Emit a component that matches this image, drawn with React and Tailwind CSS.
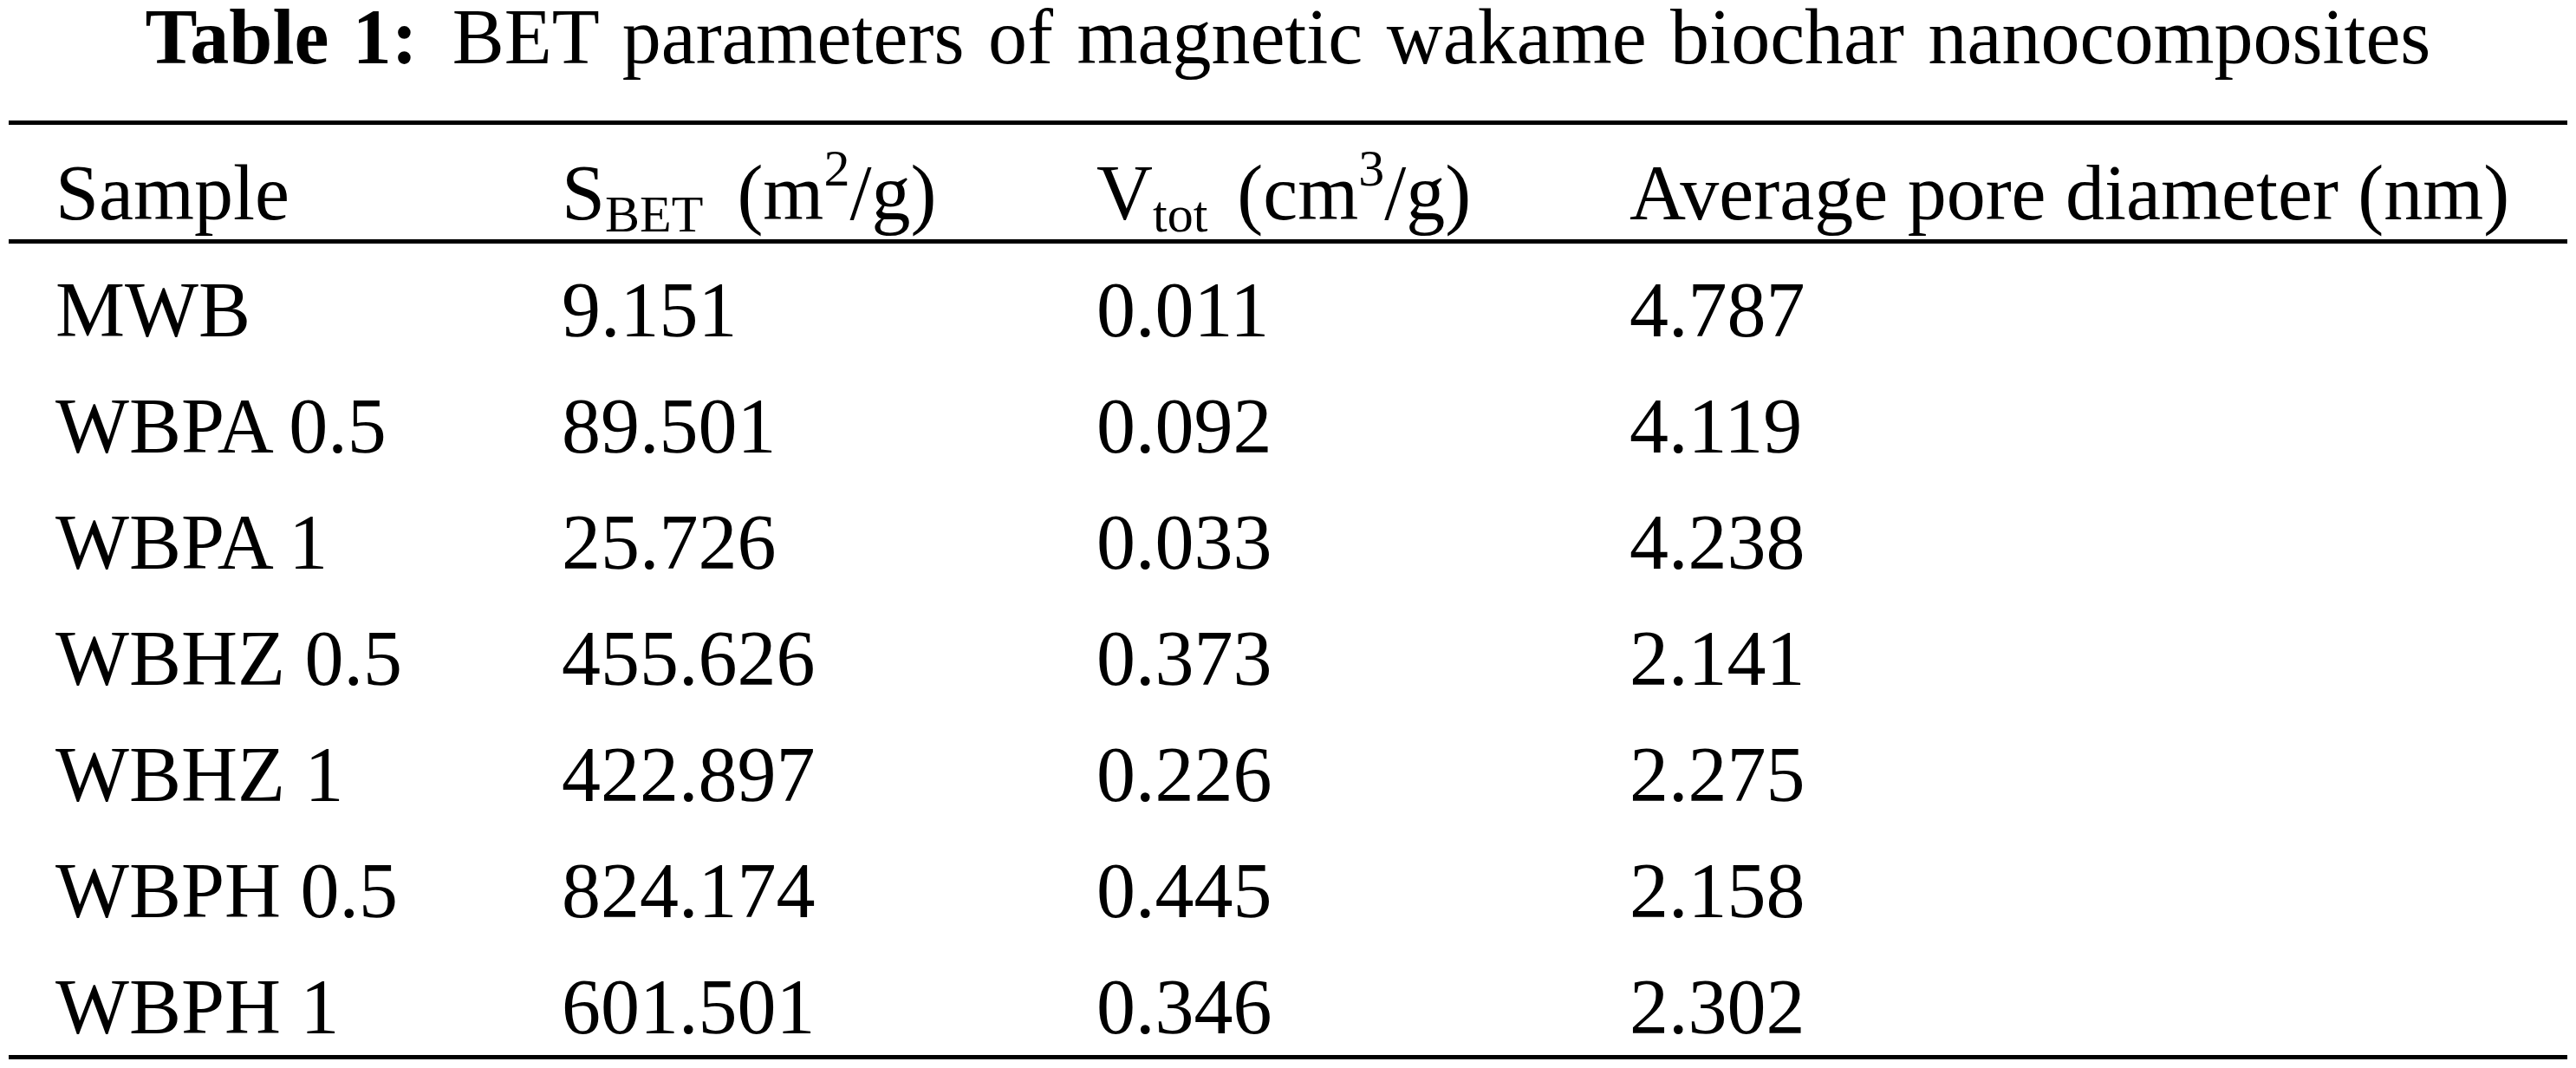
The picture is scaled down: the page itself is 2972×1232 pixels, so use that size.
import React from 'react';

const rows = [
  ['MWB', '9.151', '0.011', '4.787'],
  ['WBPA 0.5', '89.501', '0.092', '4.119'],
  ['WBPA 1', '25.726', '0.033', '4.238'],
  ['WBHZ 0.5', '455.626', '0.373', '2.141'],
  ['WBHZ 1', '422.897', '0.226', '2.275'],
  ['WBPH 0.5', '824.174', '0.445', '2.158'],
  ['WBPH 1', '601.501', '0.346', '2.302'],
];

const cols = 'grid grid-cols-[584px_617px_615px_1fr] pl-[54px]';

const Rule = () => <div className="h-[5px] bg-black" />;

const App = () => {
  return (
    <div className="w-[2972px] h-[1232px] bg-white text-black px-[10px] font-['Liberation_Serif','Times_New_Roman',serif] text-[90px] overflow-hidden">
      <div className="flex justify-center leading-[86px] whitespace-pre [word-spacing:5px]">
        <span className="font-bold">Table 1:</span>
        <span className="ml-[40px]">BET parameters of magnetic wakame biochar nanocomposites</span>
      </div>

      <div className="mt-[53px]">
        <Rule />
        <div className={`${cols} leading-[100px] pt-[29px] pb-[3px] whitespace-nowrap`}>
          <div>Sample</div>
          <div>
            S<span className="relative top-[14px] text-[60px] leading-none">BET</span>
            <span className="ml-[39px]">(m</span>
            <span className="relative top-[-39px] text-[60px] leading-none">2</span>/g)
          </div>
          <div>
            V<span className="relative top-[14px] text-[60px] leading-none">tot</span>
            <span className="ml-[34px]">(cm</span>
            <span className="relative top-[-39px] text-[60px] leading-none">3</span>/g)
          </div>
          <div>Average pore diameter (nm)</div>
        </div>
        <Rule />

        <div>
          {rows.map((r, i) => (
            <div
              key={r[0]}
              className={`${cols} leading-[100px] pt-[27px] whitespace-nowrap ${i === rows.length - 1 ? 'pb-[5px]' : 'pb-[7px]'}`}
            >
              {r.map((c, j) => (
                <div key={j}>{c}</div>
              ))}
            </div>
          ))}
        </div>
        <Rule />
      </div>
    </div>
  );
};

export default App;
